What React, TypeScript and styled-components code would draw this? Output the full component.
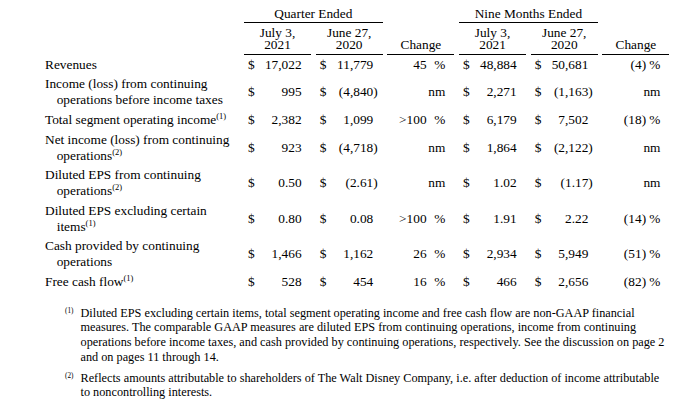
import React from "react";
import styled, { createGlobalStyle } from "styled-components";

const Global = createGlobalStyle`
  html, body { margin: 0; padding: 0; background: #ffffff; }
  body { font-family: "Liberation Serif", "Times New Roman", "DejaVu Serif", serif; color: #000; }
`;

const Page = styled.div`
  width: 700px;
  height: 416px;
  box-sizing: border-box;
  padding: 6px 0 0 45px;
  font-family: "Liberation Serif", "Times New Roman", "DejaVu Serif", serif;
  font-size: 13.33px;
  line-height: 16px;
  color: #000;
  overflow: hidden;
`;

const Row = styled.div`
  display: grid;
  grid-template-columns: 194.3px repeat(6, 67px);
  column-gap: 4.7px;
`;

const GroupTitle = styled.div<{ $start: number }>`
  grid-column: ${(p) => p.$start} / span 2;
  text-align: center;
  border-bottom: 1.3px solid #000;
`;

const SubHead = styled.div<{ $col: number }>`
  grid-column: ${(p) => p.$col};
  display: flex;
  flex-direction: column;
  justify-content: flex-end;
  align-items: center;
  padding: 3.5px 0 3.5px;
  line-height: 12px;
  border-bottom: 1.3px solid #000;
`;

const BodyRow = styled(Row)`
  padding: 1.8px 0;
  align-items: center;
`;

const Label = styled.div`
  grid-column: 1;
`;

const LabelLine = styled.div<{ $indent?: boolean }>`
  padding-left: ${(p) => (p.$indent ? "11.7px" : "0")};
  white-space: nowrap;
`;

const Sup = styled.sup`
  font-size: 8.5px;
  line-height: 0;
  vertical-align: 5px;
`;

const Cell = styled.div`
  display: flex;
  align-items: baseline;
  padding: 0 5px 0 4px;
  white-space: nowrap;
`;

const Dollar = styled.span`
  flex: none;
`;

const Num = styled.span`
  flex: 1;
  text-align: right;
`;

const Paren = styled.span`
  flex: none;
  width: 4.4px;
`;

const ChangeCell = styled.div`
  display: flex;
  align-items: baseline;
  justify-content: flex-end;
  padding-right: 9px;
  white-space: nowrap;
`;

const Pct = styled.span`
  margin-left: 3.3px;
`;

const Notes = styled.div`
  margin-top: 14px;
  font-size: 12.25px;
  line-height: 14.7px;
  padding-left: 20px;
`;

const Note = styled.div`
  display: flex;
  & + & {
    margin-top: 6.2px;
  }
`;

const Marker = styled.span`
  flex: none;
  width: 15.5px;
  font-size: 7.2px;
  line-height: 10px;
`;

const NoteText = styled.div`
  white-space: nowrap;
`;

const NoteLine = styled.div``;

type RowData = {
  label: React.ReactNode[];
  vals: [string, string, string, string, string, string];
};

const S = ({ n }: { n: number }) => <Sup>({n})</Sup>;

const rows: RowData[] = [
  { label: ["Revenues"], vals: ["17,022", "11,779", "45 %", "48,884", "50,681", "(4) %"] },
  {
    label: ["Income (loss) from continuing", "operations before income taxes"],
    vals: ["995", "(4,840)", "nm", "2,271", "(1,163)", "nm"],
  },
  {
    label: [<>Total segment operating income<S n={1} /></>],
    vals: ["2,382", "1,099", ">100 %", "6,179", "7,502", "(18) %"],
  },
  {
    label: ["Net income (loss) from continuing", <>operations<S n={2} /></>],
    vals: ["923", "(4,718)", "nm", "1,864", "(2,122)", "nm"],
  },
  {
    label: ["Diluted EPS from continuing", <>operations<S n={2} /></>],
    vals: ["0.50", "(2.61)", "nm", "1.02", "(1.17)", "nm"],
  },
  {
    label: ["Diluted EPS excluding certain", <>items<S n={1} /></>],
    vals: ["0.80", "0.08", ">100 %", "1.91", "2.22", "(14) %"],
  },
  {
    label: ["Cash provided by continuing", "operations"],
    vals: ["1,466", "1,162", "26 %", "2,934", "5,949", "(51) %"],
  },
  {
    label: [<>Free cash flow<S n={1} /></>],
    vals: ["528", "454", "16 %", "466", "2,656", "(82) %"],
  },
];

function Amount({ v }: { v: string }) {
  const neg = v.endsWith(")");
  return (
    <Cell>
      <Dollar>$</Dollar>
      <Num>{neg ? v.slice(0, -1) : v}</Num>
      <Paren>{neg ? ")" : ""}</Paren>
    </Cell>
  );
}

function Change({ v }: { v: string }) {
  if (!v.endsWith("%")) return <ChangeCell>{v}</ChangeCell>;
  const n = v.replace(" %", "");
  const neg = n.endsWith(")");
  return (
    <ChangeCell>
      <span>{neg ? n.slice(0, -1) : n}</span>
      <Paren>{neg ? ")" : ""}</Paren>
      <Pct>%</Pct>
    </ChangeCell>
  );
}

const heads = [
  ["July 3,", "2021"],
  ["June 27,", "2020"],
  ["Change"],
  ["July 3,", "2021"],
  ["June 27,", "2020"],
  ["Change"],
];

const notes = [
  {
    n: 1,
    lines: [
      "Diluted EPS excluding certain items, total segment operating income and free cash flow are non-GAAP financial",
      "measures. The comparable GAAP measures are diluted EPS from continuing operations, income from continuing",
      "operations before income taxes, and cash provided by continuing operations, respectively. See the discussion on page 2",
      "and on pages 11 through 14.",
    ],
  },
  {
    n: 2,
    lines: [
      "Reflects amounts attributable to shareholders of The Walt Disney Company, i.e. after deduction of income attributable",
      "to noncontrolling interests.",
    ],
  },
];

export default function App() {
  return (
    <>
      <Global />
      <Page>
        <Row>
          <GroupTitle $start={2}>Quarter Ended</GroupTitle>
          <GroupTitle $start={5}>Nine Months Ended</GroupTitle>
        </Row>
        <Row>
          {heads.map((h, i) => (
            <SubHead key={i} $col={i + 2}>
              {h.map((t) => (
                <span key={t}>{t}</span>
              ))}
            </SubHead>
          ))}
        </Row>
        {rows.map((r, i) => (
          <BodyRow key={i}>
            <Label>
              {r.label.map((l, j) => (
                <LabelLine key={j} $indent={j > 0}>
                  {l}
                </LabelLine>
              ))}
            </Label>
            <Amount v={r.vals[0]} />
            <Amount v={r.vals[1]} />
            <Change v={r.vals[2]} />
            <Amount v={r.vals[3]} />
            <Amount v={r.vals[4]} />
            <Change v={r.vals[5]} />
          </BodyRow>
        ))}
        <Notes>
          {notes.map((note) => (
            <Note key={note.n}>
              <Marker>({note.n})</Marker>
              <NoteText>
                {note.lines.map((l) => (
                  <NoteLine key={l}>{l}</NoteLine>
                ))}
              </NoteText>
            </Note>
          ))}
        </Notes>
      </Page>
    </>
  );
}
